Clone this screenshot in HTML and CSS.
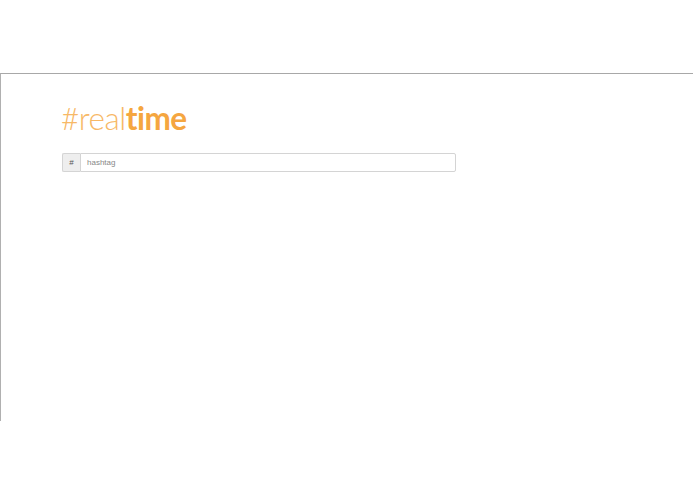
FILE: index.html
```html
<!DOCTYPE html>
<html>
<head>
<meta charset="utf-8">
<link rel="stylesheet" href="styles.css">
</head>
<body>
<div class="frame">
  <div class="content">
    <h1 class="logo"><span class="thin">#real</span><span class="bold">time</span></h1>
    <div class="input-group">
      <span class="addon">#</span>
      <input class="field" type="text" placeholder="hashtag">
    </div>
  </div>
</div>
</body>
</html>
```
FILE: styles.css
```css
html, body { margin: 0; padding: 0; background: #fff; }
body { font-family: "Liberation Sans", Arial, sans-serif; }
.frame {
  margin-top: 73px;
  width: 693px;
  height: 348px;
  border-top: 1px solid #a8a8a8;
  border-left: 1px solid #b0b0b0;
  box-sizing: border-box;
}
.content { padding: 25px 0 0 60px; }
.logo {
  margin: 0;
  font-family: "Lato", "Liberation Sans", sans-serif;
  font-size: 31.5px;
  line-height: 38px;
  color: #f5a640;
  letter-spacing: -0.5px;
  font-weight: normal;
}
.thin { font-weight: 300; color: #f7b866; }
.bold { font-weight: 700; }
.input-group {
  display: flex;
  margin-top: 16px;
  width: 394px;
  height: 19px;
  margin-left: 1px;
}
.addon {
  width: 18px;
  background: #eeeeee;
  border: 1px solid #d4d4d4;
  border-right: none;
  border-radius: 2px 0 0 2px;
  font-size: 8px;
  color: #555;
  display: flex;
  align-items: center;
  justify-content: center;
  box-sizing: border-box;
}
.field {
  flex: 1;
  margin: 0;
  border: 1px solid #d4d4d4;
  border-radius: 0 2px 2px 0;
  padding: 0 6px;
  font-size: 8px;
  font-family: "Liberation Sans", Arial, sans-serif;
  color: #555;
  outline: none;
  box-sizing: border-box;
  height: 19px;
}
.field::placeholder { color: #888; }
```
